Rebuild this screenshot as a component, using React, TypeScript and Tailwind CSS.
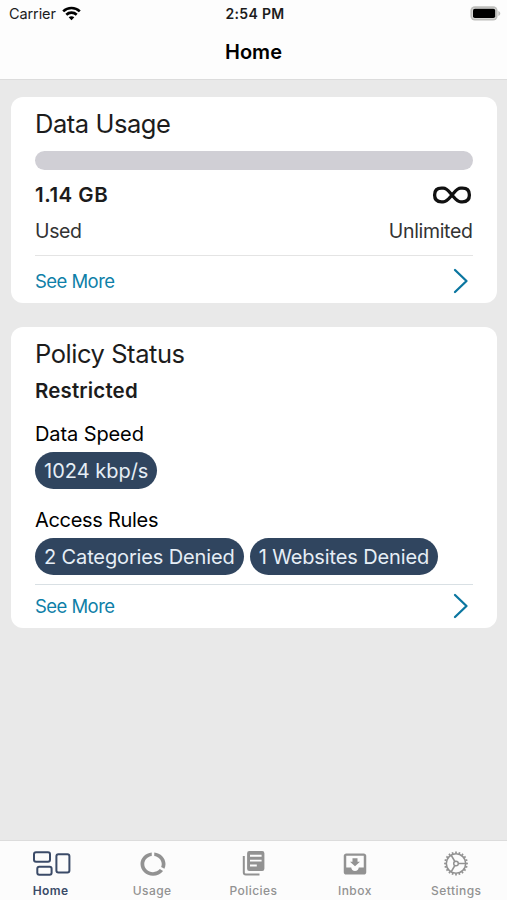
import React from "react";

interface TabItem {
	label: string;
	icon: React.ReactNode;
	active?: boolean;
}

const SETTINGS_TEETH = Array.from({ length: 20 }, (_, i) => i * 18);

const tabs: TabItem[] = [
	{
		label: "Home",
		active: true,
		icon: (
			<svg width="40" height="28" viewBox="0 0 40 28" fill="none" stroke="currentColor" strokeWidth="2">
				<rect x="3" y="2.2" width="16" height="9.6" rx="2" />
				<rect x="6.3" y="16.8" width="14.3" height="8" rx="2" />
				<rect x="25.4" y="4.2" width="13" height="18.4" rx="2" />
			</svg>
		),
	},
	{
		label: "Usage",
		icon: (
			<svg className="ml-px" width="30" height="28" viewBox="0 0 24 24" preserveAspectRatio="none" fill="currentColor">
				<path d="M13 2.05v3.03c3.39.49 6 3.39 6 6.92 0 .9-.18 1.75-.48 2.54l2.6 1.53c.56-1.24.88-2.62.88-4.07 0-5.18-3.95-9.45-9-9.95zM12 19c-3.87 0-7-3.13-7-7 0-3.53 2.61-6.43 6-6.92V2.05c-5.06.5-9 4.76-9 9.95 0 5.52 4.47 10 9.99 10 3.31 0 6.24-1.61 8.06-4.09l-2.6-1.53C16.17 17.98 14.21 19 12 19z" />
			</svg>
		),
	},
	{
		label: "Policies",
		icon: (
			<svg width="28" height="28" viewBox="0 0 28 28" fill="none" stroke="currentColor" strokeWidth="2">
				<path d="M4.8 6v16.5a2 2 0 0 0 2 2H20.5" />
				<path
					fill="currentColor"
					stroke="none"
					fillRule="evenodd"
					d="M10.3 1h12.9a2.2 2.2 0 0 1 2.2 2.2v15.5a2.2 2.2 0 0 1-2.2 2.2H10.3a2.2 2.2 0 0 1-2.2-2.2V3.2A2.2 2.2 0 0 1 10.3 1zM11 4.8v1.9h11.6V4.8zM11 9.7v1.9h11.6V9.7zM11 14.6v1.9h6.8v-1.9z"
				/>
			</svg>
		),
	},
	{
		label: "Inbox",
		icon: (
			<svg width="30" height="28" viewBox="0 0 24 24" preserveAspectRatio="none" fill="currentColor">
				<path d="M19 3H5c-1.1 0-2 .9-2 2v14c0 1.1.89 2 2 2h14c1.1 0 2-.9 2-2V5c0-1.1-.9-2-2-2zm0 12h-4c0 1.66-1.35 3-3 3s-3-1.34-3-3H5V5h14v10zm-3-5h-2V7h-4v3H8l4 4 4-4z" />
			</svg>
		),
	},
	{
		label: "Settings",
		icon: (
			<svg width="28" height="28" viewBox="0 0 28 28" fill="none" stroke="currentColor">
				<circle cx="14" cy="13.5" r="9.7" strokeWidth="1.6" />
				{SETTINGS_TEETH.map((angle) => (
					<path key={angle} d="M14 1.6v2" strokeWidth="1.7" transform={`rotate(${angle} 14 13.5)`} />
				))}
				<circle cx="14" cy="13.5" r="2.3" strokeWidth="1.5" />
				<path d="M16.3 13.5h7.4M12.85 11.5 9.15 5.1M12.85 15.5l-3.7 6.4" strokeWidth="1.6" />
			</svg>
		),
	},
];

function StatusBar() {
	return (
		<div className="grid h-[27px] grid-cols-3 items-center pr-[6px] pl-[9px] text-[#1c1c1c]">
			<div className="flex items-center gap-[6px]">
				<span className="text-[14.5px] tracking-[-0.1px]">Carrier</span>
				<svg className="-mt-px" width="19" height="15" viewBox="0 0 19 15" fill="none" stroke="#000" strokeWidth="2.6">
					<path d="M1.2 5.4c4.6-4.5 12-4.5 16.6 0" />
					<path d="M4.3 8.7c2.9-2.8 7.5-2.8 10.4 0" />
					<path d="M9.5 14.2 6.7 11.3c1.6-1.4 4-1.4 5.6 0z" fill="#000" stroke="none" />
				</svg>
			</div>
			<span className="text-center text-[14px] font-semibold tracking-[0.35px]">2:54 PM</span>
			<svg className="justify-self-end" width="31" height="15" viewBox="0 0 31 15">
				<rect x="0.4" y="0.2" width="27.2" height="14.4" rx="4.5" fill="#bebebc" />
				<rect x="2.2" y="2" width="23.6" height="10.8" rx="2.6" fill="#dededc" />
				<rect x="3" y="2.8" width="22.2" height="9.2" rx="1.8" fill="#000" />
				<path d="M28.3 5c2.6.7 2.6 4.3 0 5z" fill="#bebebc" />
			</svg>
		</div>
	);
}

function SeeMore() {
	return (
		<button className="flex w-full items-center justify-between text-left">
			<span className="text-[18.5px] tracking-[-0.55px] text-[#0f7fa8]">See More</span>
			<svg className="-mt-px mr-1" width="16" height="26" viewBox="0 0 16 26" fill="none" stroke="#0b76a0" strokeWidth="2.3" strokeLinecap="round" strokeLinejoin="round">
				<path d="m2 2 11.5 11L2 24" />
			</svg>
		</button>
	);
}

function Pill({ children }: { children: React.ReactNode }) {
	return <span className="flex h-[37px] items-center rounded-full bg-[#30455f] px-[9px] text-[20px] whitespace-nowrap text-[#e6eef6]">{children}</span>;
}

function DataUsageCard() {
	return (
		<section className="flex h-[206px] flex-col rounded-[12px] bg-white px-[24.5px] pt-[9px]">
			<h2 className="text-[25.5px] leading-9 tracking-[-0.45px]">Data Usage</h2>
			<div className="mt-[9px] h-[19px] shrink-0 rounded-full bg-[#d0cfd5]" />
			<div className="mt-[11px] flex h-7 items-center justify-between">
				<span className="text-[20.5px] font-semibold tracking-[0.5px]">1.14 GB</span>
				<svg className="mr-px" width="40" height="20" viewBox="0 0 40 20" fill="none" stroke="#111" strokeWidth="3.3">
					<path d="M20 10c-2.6-2.9-4.8-6.8-8.8-6.8H9.5C5.2 3.2 2.6 5.4 2.6 10s2.6 6.8 6.9 6.8h1.7c4 0 6.2-3.9 8.8-6.8s4.8-6.8 8.8-6.8h1.7c4.3 0 6.9 2.2 6.9 6.8s-2.6 6.8-6.9 6.8h-1.7c-4 0-6.2-3.9-8.8-6.8z" />
				</svg>
			</div>
			<div className="mt-[9px] flex h-7 items-center justify-between text-[19.5px] tracking-[-0.35px] text-[#333]">
				<span>Used</span>
				<span>Unlimited</span>
			</div>
			<div className="mt-[9px] mb-3 border-t border-[#e4e4e4]" />
			<SeeMore />
		</section>
	);
}

function PolicyStatusCard() {
	return (
		<section className="flex h-[301px] flex-col rounded-[12px] bg-white px-[24.5px] pt-[9px]">
			<h2 className="text-[25.5px] leading-9 tracking-[-0.45px]">Policy Status</h2>
			<p className="mt-[5px] text-[20.5px] leading-7 font-semibold tracking-[0.15px]">Restricted</p>
			<h3 className="mt-[15px] text-[20px] leading-7 tracking-[-0.1px] text-black">Data Speed</h3>
			<div className="mt-[4px] flex">
				<Pill>1024 kbp/s</Pill>
			</div>
			<h3 className="mt-[17px] text-[20px] leading-7 tracking-[-0.3px] text-black">Access Rules</h3>
			<div className="mt-[4px] flex gap-[6px] tracking-[-0.13px]">
				<Pill>2 Categories Denied</Pill>
				<Pill>1 Websites Denied</Pill>
			</div>
			<div className="mt-[9px] mb-2 border-t border-[#d9e0e4]" />
			<SeeMore />
		</section>
	);
}

function TabBar() {
	return (
		<nav className="grid h-[60px] grid-cols-5 border-t border-[#dcdcdc] bg-[#fcfcfc]">
			{tabs.map((tab) => (
				<button key={tab.label} className={`flex flex-col items-center pt-[9px] ${tab.active ? "text-[#3b4b68]" : "text-[#929292]"}`}>
					{tab.icon}
					<span className={`mt-[5px] text-[12px] leading-4 tracking-[0.45px] ${tab.active ? "font-semibold" : "font-medium"}`}>{tab.label}</span>
				</button>
			))}
		</nav>
	);
}

export default function App() {
	return (
		<div className="flex h-[900px] w-[507px] flex-col overflow-hidden bg-[#e9e9e9] font-['Inter',sans-serif] text-[#1c1c1c]">
			<header className="h-[80px] border-b border-[#dcdcdc] bg-[#fdfdfd]">
				<StatusBar />
				<h1 className="mt-[11px] text-center text-[20px] leading-7 font-semibold text-black">Home</h1>
			</header>
			<main className="flex flex-1 flex-col gap-6 pt-[17px] pr-[10px] pl-[10.5px]">
				<DataUsageCard />
				<PolicyStatusCard />
			</main>
			<TabBar />
		</div>
	);
}
